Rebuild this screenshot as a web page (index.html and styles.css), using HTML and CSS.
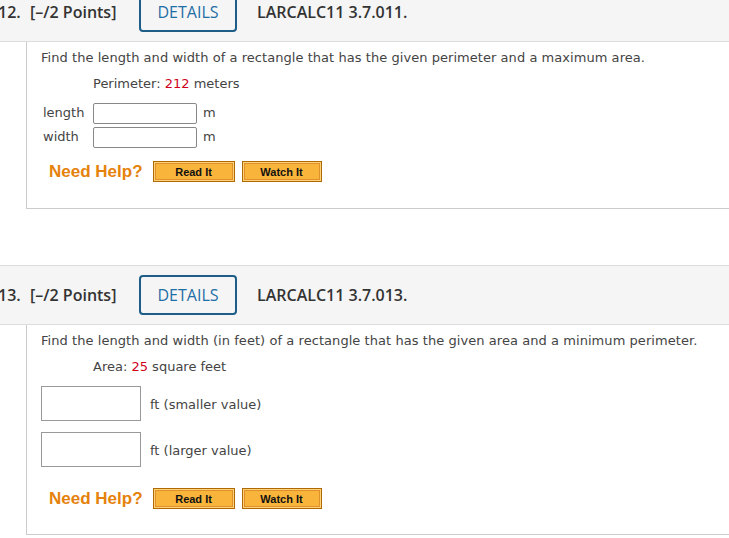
FILE: index.html
```html
<!DOCTYPE html>
<html>
<head>
<meta charset="utf-8">
<link rel="stylesheet" href="styles.css">
</head>
<body>
<div class="page">
  <div class="qhead">
    <span class="qnum">12.</span>
    <span class="qpts">[–/2 Points]</span>
    <span class="details">DETAILS</span>
    <span class="qcode">LARCALC11 3.7.011.</span>
  </div>
  <div class="card card1">
    <p class="prompt">Find the length and width of a rectangle that has the given perimeter and a maximum area.</p>
    <p class="given">Perimeter: <span class="red">212</span> meters</p>
    <div class="grid">
      <span class="lbl">length</span><span class="sbox"></span><span class="unit">m</span>
      <span class="lbl">width</span><span class="sbox"></span><span class="unit">m</span>
    </div>
    <div class="help">
      <span class="needhelp">Need Help?</span>
      <span class="btn read">Read It</span>
      <span class="btn watch">Watch It</span>
    </div>
  </div>

  <div class="qhead qhead2">
    <span class="qnum">13.</span>
    <span class="qpts">[–/2 Points]</span>
    <span class="details">DETAILS</span>
    <span class="qcode">LARCALC11 3.7.013.</span>
  </div>
  <div class="card card2">
    <p class="prompt wide">Find the length and width (in feet) of a rectangle that has the given area and a minimum perimeter.</p>
    <p class="given">Area: <span class="red">25</span> square feet</p>
    <div class="row"><span class="bbox"></span><span class="unit2">ft (smaller value)</span></div>
    <div class="row"><span class="bbox"></span><span class="unit2">ft (larger value)</span></div>
    <div class="help help2">
      <span class="needhelp">Need Help?</span>
      <span class="btn read">Read It</span>
      <span class="btn watch">Watch It</span>
    </div>
  </div>
</div>
</body>
</html>
```

FILE: styles.css
```css
html, body {
  margin: 0;
  padding: 0;
  background: #fff;
  overflow: hidden;
}
.page {
  width: 729px;
  margin-top: -18px;
}
.qhead {
  box-sizing: border-box;
  height: 60px;
  background: #f5f5f5;
  border-top: 1px solid #dddddd;
  border-bottom: 1px solid #dddddd;
  display: flex;
  align-items: center;
  font-family: "Open Sans", sans-serif;
  font-weight: 600;
  font-size: 16px;
  color: #333;
}
.qnum {
  margin-left: -2px;
  width: 32px;
}
.qpts {
  width: 109px;
}
.details {
  box-sizing: border-box;
  width: 98px;
  height: 40px;
  border: 2px solid #1d5d88;
  border-radius: 4px;
  display: flex;
  align-items: center;
  justify-content: center;
  font-weight: 400;
  font-size: 16px;
  color: #1f6ea5;
}
.qcode {
  margin-left: 20px;
}
.card {
  margin-left: 26px;
  border-left: 1px solid #cccccc;
  border-bottom: 1px solid #cccccc;
  background: #fff;
  padding-left: 14px;
  font-family: "DejaVu Sans", Verdana, sans-serif;
  font-size: 13px;
  color: #444;
}
.card p { margin: 0; }
.card1 {
  padding-top: 6px;
  box-sizing: border-box;
  height: 167px;
}
.prompt {
  line-height: 20px;
  letter-spacing: 0.05px;
}
.prompt.wide { letter-spacing: 0.06px; }
.given {
  line-height: 20px;
  margin-top: 6px !important;
  padding-left: 52px;
}
.red { color: #d0021b; }
.grid {
  margin-top: 9px;
  display: grid;
  grid-template-columns: 50px 104px auto;
  grid-auto-rows: 20px;
  row-gap: 4px;
  align-items: center;
  padding-left: 2px;
}
.grid .lbl { line-height: 20px; }
.sbox {
  box-sizing: border-box;
  width: 104px;
  height: 21px;
  border: 1px solid #888;
  border-radius: 2px;
  background: #fff;
}
.unit {
  margin-left: 6px;
  line-height: 20px;
}
.help {
  display: flex;
  align-items: center;
  margin-top: 14px;
  padding-left: 8px;
}
.needhelp {
  font-family: "Liberation Sans", Arial, sans-serif;
  font-weight: 700;
  font-size: 17px;
  color: #e5820c;
  margin-right: 10px;
}
.btn {
  box-sizing: border-box;
  height: 21px;
  border: 1px solid #b06800;
  background: #f9b43c;
  box-shadow: inset 0 0 0 1px #ffd27c, inset 0 0 0 2px #e0902a;
  display: inline-flex;
  align-items: center;
  justify-content: center;
  font-family: "Liberation Sans", Arial, sans-serif;
  font-weight: 700;
  font-size: 11px;
  color: #111;
}
.read { width: 82px; margin-right: 7px; }
.watch { width: 80px; }

.qhead2 {
  margin-top: 56px;
}
.card2 {
  box-sizing: border-box;
  height: 210px;
  padding-top: 6px;
}
.row {
  display: flex;
  align-items: center;
  margin-top: 9px;
}
.row + .row { margin-top: 11px; }
.bbox {
  box-sizing: border-box;
  width: 100px;
  height: 35px;
  border: 1px solid #999;
  background: #fff;
}
.unit2 { margin-left: 9px; padding-top: 2px; }
.help2 { margin-top: 21px; }
```
